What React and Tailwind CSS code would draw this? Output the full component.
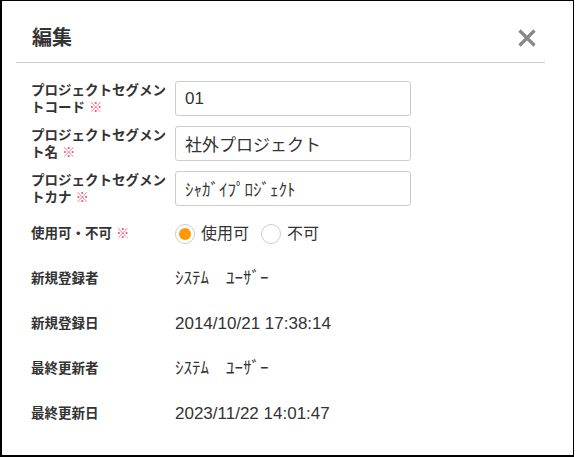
import React, { useState } from 'react';

const font = { fontFamily: '"Liberation Sans", "Noto Sans CJK JP", sans-serif' };

const Required = () => <span className="ml-[4px] text-[#ec5a7d] font-normal">※</span>;

const Row = ({ label, required, children }) => (
    <div className="flex items-center h-[35px]">
        <div className="w-[144px] shrink-0 pr-[4px] text-[13.5px] leading-[17px] font-bold text-[#333]">
            {label}
            {required && <Required />}
        </div>
        <div className="flex-1 flex items-center">{children}</div>
    </div>
);

const TextInput = ({ value }) => (
    <input
        type="text"
        defaultValue={value}
        className="w-[236px] h-[35px] pl-[9px] border border-[#ccc] rounded-[3px] text-[17px] text-[#333] outline-none"
        style={font}
    />
);

const Radio = ({ checked, label, onClick, className }) => (
    <label className={`flex items-center cursor-pointer ${className || ''}`} onClick={onClick}>
        <span className="w-[20px] h-[20px] rounded-full border border-[#ccc] bg-white flex items-center justify-center">
            {checked && <span className="w-[12px] h-[12px] rounded-full bg-[#ff9900]" />}
        </span>
        <span className="ml-[6px] text-[16px] text-[#333]">{label}</span>
    </label>
);

const EditDialog = () => {
    const [usable, setUsable] = useState(true);

    return (
        <div
            className="w-[574px] h-[457px] bg-white border-black border-l-2 border-t border-r border-b-2"
            style={font}
        >
            {/* header */}
            <div className="ml-[14px] w-[529px] h-[62px] pt-[12px] flex items-center justify-between border-b border-[#ccc]">
                <h1 className="pl-[16px] text-[20px] font-bold text-[#333]">編集</h1>
                <button className="mr-[9px] w-[18px] h-[18px] flex items-center justify-center">
                    <svg width="18" height="18" viewBox="0 0 18 18">
                        <path d="M1.5 1.5 L16.5 16.5 M16.5 1.5 L1.5 16.5" stroke="#888" strokeWidth="3.2" strokeLinecap="butt" />
                    </svg>
                </button>
            </div>

            {/* body */}
            <div className="pl-[29px] pt-[18px] flex flex-col gap-[10px]">
                <Row label="プロジェクトセグメントコード" required>
                    <TextInput value="01" />
                </Row>
                <Row label="プロジェクトセグメント名" required>
                    <TextInput value="社外プロジェクト" />
                </Row>
                <Row label="プロジェクトセグメントカナ" required>
                    <TextInput value="ｼｬｶﾞｲﾌﾟﾛｼﾞｪｸﾄ" />
                </Row>
                <Row label="使用可・不可" required>
                    <Radio checked={usable} label="使用可" onClick={() => setUsable(true)} />
                    <Radio checked={!usable} label="不可" onClick={() => setUsable(false)} className="ml-[12px]" />
                </Row>
                <Row label="新規登録者">
                    <span className="text-[17px] text-[#333]">ｼｽﾃﾑ　ﾕｰｻﾞｰ</span>
                </Row>
                <Row label="新規登録日">
                    <span className="text-[17px] text-[#333]">2014/10/21 17:38:14</span>
                </Row>
                <Row label="最終更新者">
                    <span className="text-[17px] text-[#333]">ｼｽﾃﾑ　ﾕｰｻﾞｰ</span>
                </Row>
                <Row label="最終更新日">
                    <span className="text-[17px] text-[#333]">2023/11/22 14:01:47</span>
                </Row>
            </div>
        </div>
    );
};

export default function App() {
    return <EditDialog />;
}
